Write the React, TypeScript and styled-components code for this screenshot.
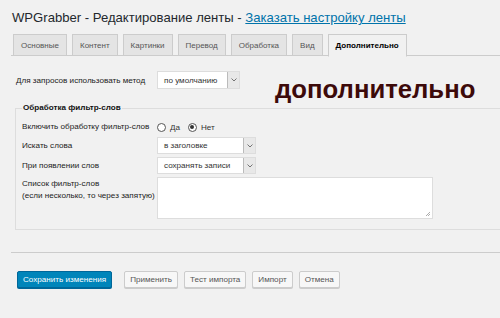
import React from "react";
import styled, { createGlobalStyle } from "styled-components";

const GlobalStyle = createGlobalStyle`
    html, body {
        margin: 0;
        padding: 0;
        background: #f1f1f1;
        overflow: hidden;
    }
    body {
        width: 500px;
        height: 318px;
        font-family: "Liberation Sans", Arial, sans-serif;
        color: #444;
    }
`

const Page = styled.div`
    padding: 8px 0 0 11px;
`

const Title = styled.h1`
    margin: 0 0 0 1px;
    font-size: 13.1px;
    font-weight: 400;
    line-height: 20px;
    color: #23282d;
    white-space: nowrap;

    a {
        color: #0073aa;
        text-decoration: underline;
    }
`

const TabBar = styled.div`
    display: flex;
    gap: 5px;
    margin-top: 6px;
    padding-left: 2px;
    border-bottom: 1px solid #ccc;
    height: 21px;
`

const Tab = styled.div<{ $active?: boolean }>`
    display: flex;
    align-items: center;
    padding: 0 7px;
    font-size: 8px;
    border: 1px solid #ccc;
    border-bottom: ${p => p.$active ? "1px solid #f1f1f1" : "none"};
    background: ${p => p.$active ? "#f1f1f1" : "#e4e4e4"};
    color: ${p => p.$active ? "#000" : "#555"};
    font-weight: ${p => p.$active ? 700 : 400};
    height: ${p => p.$active ? "21px" : "20px"};
    white-space: nowrap;
`

const Row = styled.div<{ $top?: number, $height?: number }>`
    display: flex;
    align-items: center;
    margin-top: ${p => p.$top ?? 3}px;
    height: ${p => p.$height ? `${p.$height}px` : "auto"};
`

const Label = styled.div<{ $width: number }>`
    width: ${p => p.$width}px;
    flex-shrink: 0;
    font-size: 8.1px;
    line-height: 12px;
    color: #222;
    white-space: nowrap;
`

const Select = styled.div<{ $width: number, $height: number }>`
    display: flex;
    align-items: center;
    justify-content: space-between;
    width: ${p => p.$width}px;
    height: ${p => p.$height}px;
    box-sizing: border-box;
    background: #fff;
    border: 1px solid #ddd;
    padding-left: 6px;
    font-size: 8.1px;
    color: #333;
`

const Arrow = styled.span`
    display: flex;
    align-items: center;
    justify-content: center;
    width: 11px;
    align-self: stretch;
    background: #e8e8e8;
    border-left: 1px solid #bbb;
    color: #666;
`

const Annotation = styled.div`
    margin: 3px 0 0 35px;
    font-family: "Liberation Sans", Arial, sans-serif;
    font-size: 25.7px;
    font-weight: 700;
    line-height: 30px;
    color: #3d0a0a;
`

const Fieldset = styled.fieldset`
    margin: 1px 0 0 4px;
    width: 500px;
    box-sizing: border-box;
    border: 1px solid #ddd;
    padding: 6px 0 10px 6px;

    legend {
        font-size: 8.1px;
        font-weight: 700;
        line-height: 12px;
        color: #111;
        padding: 0 1px;
    }
`

const Radio = styled.label`
    display: flex;
    align-items: center;
    gap: 4px;
    margin-right: 8px;
    font-size: 8.1px;
    color: #333;
`

const Dot = styled.span<{ $on?: boolean }>`
    width: 7px;
    height: 7px;
    border-radius: 50%;
    border: 1px solid #555;
    background: #fff;
    display: flex;
    align-items: center;
    justify-content: center;

    &::after {
        content: "";
        display: ${p => p.$on ? "block" : "none"};
        width: 4px;
        height: 4px;
        border-radius: 50%;
        background: #333;
    }
`

const TextArea = styled.div`
    position: relative;
    width: 276px;
    height: 42px;
    box-sizing: border-box;
    background: #fff;
    border: 1px solid #ddd;
`

const Grip = styled.svg`
    position: absolute;
    right: 1px;
    bottom: 1px;
`

const Divider = styled.hr`
    margin: 22px 0 0 0;
    border: none;
    border-top: 1px solid #ccc;
`

const Buttons = styled.div`
    display: flex;
    gap: 6px;
    margin: 18px 0 0 6px;
`

const Button = styled.button<{ $primary?: boolean }>`
    height: 17px;
    padding: 0 5px;
    font-family: "Liberation Sans", Arial, sans-serif;
    font-size: 8.1px;
    border-radius: 2px;
    border: 1px solid ${p => p.$primary ? "#006799" : "#ccc"};
    background: ${p => p.$primary ? "#0085ba" : "#f7f7f7"};
    color: ${p => p.$primary ? "#fff" : "#555"};
    box-shadow: 0 1px 0 ${p => p.$primary ? "#006799" : "#ccc"};
    margin-right: ${p => p.$primary ? "6px" : "0"};
    white-space: nowrap;
`

const Chevron = () => (
    <svg width="6" height="4" viewBox="0 0 6 4">
        <path d="M0.5 0.5 L3 3 L5.5 0.5" fill="none" stroke="#666" strokeWidth="0.9" />
    </svg>
)

function Dropdown({ value, width, height = 17 }: { value: string, width: number, height?: number }) {
    return <Select $width={width} $height={height}>
        {value}
        <Arrow><Chevron /></Arrow>
    </Select>
}

const tabs = ["Основные", "Контент", "Картинки", "Перевод", "Обработка", "Вид", "Дополнительно"];

export default function App() {
    return <>
        <GlobalStyle />
        <Page>
            <Title>WPGrabber - Редактирование ленты - <a href="#">Заказать настройку ленты</a></Title>
            <TabBar>
                {tabs.map((t, i) => <Tab key={t} $active={i === tabs.length - 1}>{t}</Tab>)}
            </TabBar>
            <Row $top={15} $height={30} style={{ alignItems: "flex-start" }}>
                <Label $width={141} style={{ marginTop: 4, marginLeft: 5 }}>Для запросов использовать метод</Label>
                <Dropdown value="по умолчанию" width={83} height={18} />
                <Annotation>дополнительно</Annotation>
            </Row>
            <Fieldset>
                <legend>Обработка фильтр-слов</legend>
                <Row $top={0} $height={14}>
                    <Label $width={135}>Включить обработку фильтр-слов</Label>
                    <Radio><Dot />Да</Radio>
                    <Radio><Dot $on />Нет</Radio>
                </Row>
                <Row>
                    <Label $width={135}>Искать слова</Label>
                    <Dropdown value="в заголовке" width={99} />
                </Row>
                <Row>
                    <Label $width={135}>При появлении слов</Label>
                    <Dropdown value="сохранять записи" width={99} />
                </Row>
                <Row style={{ alignItems: "flex-start" }}>
                    <Label $width={135} style={{ marginTop: 1 }}>Список фильтр-слов<br />(если несколько, то через запятую)</Label>
                    <TextArea>
                        <Grip width="6" height="6" viewBox="0 0 6 6">
                            <path d="M5 1 L1 5 M5 3 L3 5" stroke="#999" strokeWidth="0.8" />
                        </Grip>
                    </TextArea>
                </Row>
            </Fieldset>
            <Divider />
            <Buttons>
                <Button $primary>Сохранить изменения</Button>
                <Button>Применить</Button>
                <Button>Тест импорта</Button>
                <Button>Импорт</Button>
                <Button>Отмена</Button>
            </Buttons>
        </Page>
    </>
}
